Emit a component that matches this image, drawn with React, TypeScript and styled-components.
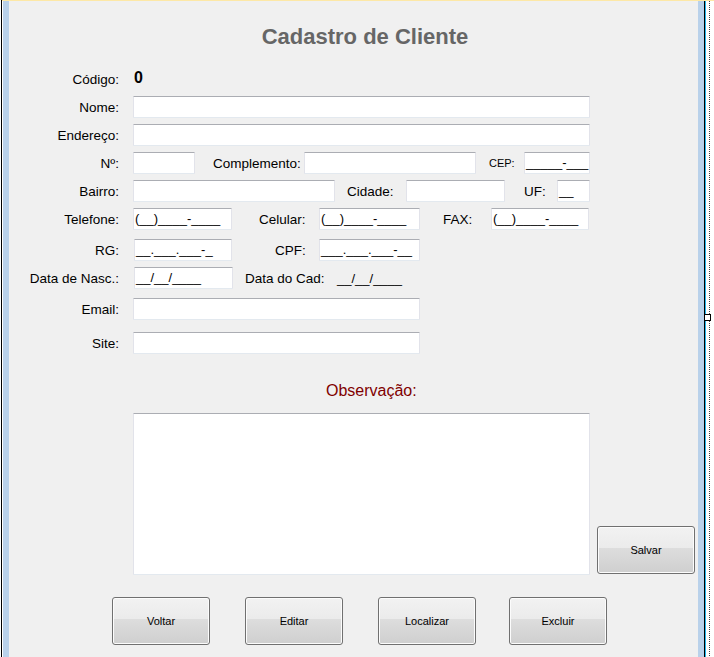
import styled, { createGlobalStyle } from "styled-components";

const GlobalStyle = createGlobalStyle`
  html, body {
    margin: 0;
    padding: 0;
    background: #ffffff;
    overflow: hidden;
  }
`;

const frameBlue = "#b9d1ea";

const Surface = styled.div`
  position: relative;
  width: 714px;
  height: 657px;
  display: flex;
  background: #ffffff;
  overflow: hidden;
`;

const LeftRule = styled.div`
  width: 1px;
  margin-left: 1px;
  background: #000000;
`;

const Stack = styled.div`
  flex: 1;
  display: flex;
  flex-direction: column;
`;

const TopStrip = styled.div`
  height: 1px;
  background: #fde8a6;
`;

const Body = styled.div`
  flex: 1;
  display: flex;
`;

const Gap = styled.div<{ $w: number }>`
  width: ${(p) => p.$w}px;
`;

const Client = styled.div`
  width: 689px;
  flex-shrink: 0;
  border-left: 6px solid ${frameBlue};
  border-right: 6px solid ${frameBlue};
  background: #f0f0f0;
  box-shadow: 1px 0 0 #000000, 2px 0 0 #1fb8ef;
`;

const DottedRule = styled.div`
  width: 1px;
  margin-left: 3px;
  background: repeating-linear-gradient(#404040 0 1px, transparent 1px 2px);
`;

const Handle = styled.div`
  position: absolute;
  left: 704px;
  top: 314px;
  width: 5px;
  height: 5px;
  border: 1px solid #000000;
  background: #ffffff;
`;

const Form = styled.div`
  padding-top: 21px;
  font-family: "Liberation Sans", Arial, sans-serif;
  color: #000000;
`;

const Title = styled.h1`
  margin: 0;
  padding-left: 23px;
  height: 30px;
  line-height: 30px;
  font-size: 22px;
  font-weight: bold;
  text-align: center;
  color: #666666;
`;

const Row = styled.div<{ $mt: number }>`
  display: flex;
  align-items: center;
  height: 22px;
  margin-top: ${(p) => p.$mt}px;
`;

const RowLabel = styled.span`
  width: 110px;
  flex-shrink: 0;
  text-align: right;
  font-size: 13.5px;
  white-space: nowrap;
`;

const FieldLabel = styled.span<{ $ml: number; $w: number; $size?: number }>`
  margin-left: ${(p) => p.$ml}px;
  width: ${(p) => p.$w}px;
  flex-shrink: 0;
  font-size: ${(p) => p.$size ?? 13.5}px;
  white-space: nowrap;
`;

const CodeValue = styled.span`
  margin-left: 15px;
  margin-top: -2px;
  font-size: 16px;
  font-weight: bold;
`;

const TextBox = styled.div<{ $ml: number; $w: number }>`
  box-sizing: border-box;
  margin-left: ${(p) => p.$ml}px;
  width: ${(p) => p.$w}px;
  height: 22px;
  flex-shrink: 0;
  padding: 0 1px;
  background: #ffffff;
  border: 1px solid;
  border-color: #abadb3 #e2e3ea #e3e9ef #e2e3ea;
  border-radius: 1px;
  font-size: 13px;
  line-height: 20px;
  white-space: nowrap;
  overflow: hidden;
`;

const MaskText = styled.span<{ $ml: number }>`
  margin-left: ${(p) => p.$ml}px;
  font-size: 13px;
  white-space: nowrap;
`;

const NoteLabel = styled.div`
  margin-top: 27px;
  margin-left: 317px;
  height: 20px;
  line-height: 20px;
  font-size: 16px;
  color: #800000;
`;

const NoteArea = styled.div`
  display: flex;
  align-items: flex-end;
  margin-top: 12px;
`;

const TextArea = styled.div`
  box-sizing: border-box;
  margin-left: 124px;
  width: 457px;
  height: 162px;
  background: #ffffff;
  border: 1px solid;
  border-color: #abadb3 #e2e3ea #e3e9ef #e2e3ea;
  border-radius: 1px;
`;

const Button = styled.button<{ $ml: number }>`
  box-sizing: border-box;
  margin-left: ${(p) => p.$ml}px;
  width: 98px;
  height: 48px;
  flex-shrink: 0;
  padding: 0;
  border: 1px solid #707070;
  border-radius: 3px;
  background: linear-gradient(
    #f2f2f2 0%,
    #ebebeb 45%,
    #dddddd 46%,
    #cfcfcf 100%
  );
  box-shadow: inset 0 0 0 1px #fcfcfc;
  font-family: "Liberation Sans", Arial, sans-serif;
  font-size: 11px;
  color: #000000;
`;

const SideButton = styled(Button)`
  margin-bottom: 1px;
`;

const ButtonBar = styled.div`
  display: flex;
  margin-top: 22px;
`;

function App() {
  return (
    <>
      <GlobalStyle />
      <Surface>
        <LeftRule />
        <Stack>
          <TopStrip />
          <Body>
            <Gap $w={1} />
            <Client>
              <Form>
                <Title>Cadastro de Cliente</Title>

                <Row $mt={16}>
                  <RowLabel>Código:</RowLabel>
                  <CodeValue>0</CodeValue>
                </Row>

                <Row $mt={6}>
                  <RowLabel>Nome:</RowLabel>
                  <TextBox $ml={14} $w={457} />
                </Row>

                <Row $mt={6}>
                  <RowLabel>Endereço:</RowLabel>
                  <TextBox $ml={14} $w={457} />
                </Row>

                <Row $mt={6}>
                  <RowLabel>Nº:</RowLabel>
                  <TextBox $ml={14} $w={62} />
                  <FieldLabel $ml={18} $w={88}>Complemento:</FieldLabel>
                  <TextBox $ml={3} $w={172} />
                  <FieldLabel $ml={13} $w={26} $size={11}>CEP:</FieldLabel>
                  <TextBox $ml={9} $w={66}>_____-___</TextBox>
                </Row>

                <Row $mt={6}>
                  <RowLabel>Bairro:</RowLabel>
                  <TextBox $ml={14} $w={202} />
                  <FieldLabel $ml={12} $w={47}>Cidade:</FieldLabel>
                  <TextBox $ml={12} $w={99} />
                  <FieldLabel $ml={19} $w={21}>UF:</FieldLabel>
                  <TextBox $ml={12} $w={33}>__</TextBox>
                </Row>

                <Row $mt={6}>
                  <RowLabel>Telefone:</RowLabel>
                  <TextBox $ml={14} $w={99}>(__)____-____</TextBox>
                  <FieldLabel $ml={27} $w={46}>Celular:</FieldLabel>
                  <TextBox $ml={14} $w={101}>(__)____-____</TextBox>
                  <FieldLabel $ml={23} $w={28}>FAX:</FieldLabel>
                  <TextBox $ml={20} $w={98}>(__)____-____</TextBox>
                </Row>

                <Row $mt={9}>
                  <RowLabel>RG:</RowLabel>
                  <TextBox $ml={15} $w={98}>__.___.___-_</TextBox>
                  <FieldLabel $ml={43} $w={29}>CPF:</FieldLabel>
                  <TextBox $ml={15} $w={101}>___.___.___-__</TextBox>
                </Row>

                <Row $mt={6}>
                  <RowLabel>Data de Nasc.:</RowLabel>
                  <TextBox $ml={15} $w={99}>__/__/____</TextBox>
                  <FieldLabel $ml={12} $w={78}>Data do Cad:</FieldLabel>
                  <MaskText $ml={14}>__/__/____</MaskText>
                </Row>

                <Row $mt={9}>
                  <RowLabel>Email:</RowLabel>
                  <TextBox $ml={14} $w={287} />
                </Row>

                <Row $mt={12}>
                  <RowLabel>Site:</RowLabel>
                  <TextBox $ml={14} $w={287} />
                </Row>

                <NoteLabel>Observação:</NoteLabel>

                <NoteArea>
                  <TextArea />
                  <SideButton $ml={7}>Salvar</SideButton>
                </NoteArea>

                <ButtonBar>
                  <Button $ml={103}>Voltar</Button>
                  <Button $ml={35}>Editar</Button>
                  <Button $ml={35}>Localizar</Button>
                  <Button $ml={33}>Excluir</Button>
                </ButtonBar>
              </Form>
            </Client>
            <Gap $w={2} />
            <DottedRule />
          </Body>
        </Stack>
        <Handle />
      </Surface>
    </>
  );
}

export default App;
